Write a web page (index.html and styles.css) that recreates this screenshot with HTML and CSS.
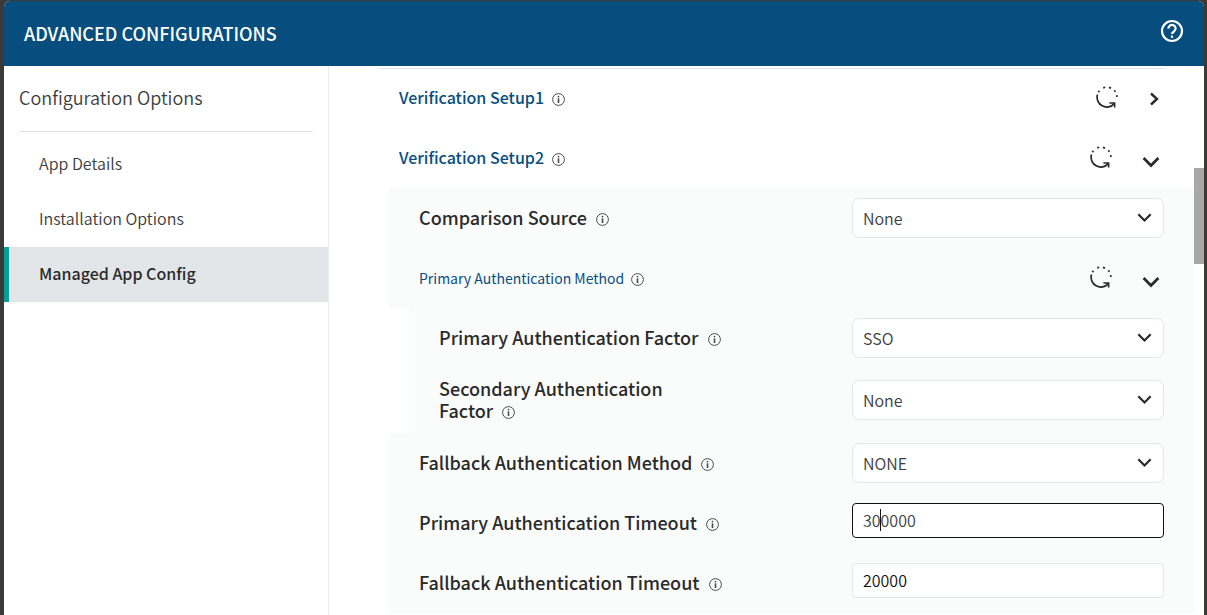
FILE: index.html
```html
<!DOCTYPE html>
<html lang="en">
<head>
<meta charset="utf-8">
<title>Advanced Configurations</title>
<link rel="stylesheet" href="styles.css">
</head>
<body>
<svg class="sprite" aria-hidden="true">
  <symbol id="info" viewBox="0 0 13 13"><circle cx="6.5" cy="6.5" r="5.9" fill="none" stroke="currentColor"/><path d="M6.5 5.3v4.7" stroke="currentColor" stroke-width="1.6"/><circle cx="6.5" cy="3.6" r=".9" fill="currentColor"/></symbol>
  <symbol id="reset" viewBox="0 0 22 22"><g fill="none" stroke="currentColor" stroke-width="1.7"><path d="M1.5 8.6A9.7 9.7 0 0 0 18.2 17.6"/><path d="M13.4 17h5.2v4.6"/><path d="M2.4 6.2l.9-1.5M7.2 1.9l2-.6M13 1.4l2 .7M18.3 4.4l1.1 1.4M20.7 9.2l.2 1.8"/></g></symbol>
  <symbol id="down" viewBox="0 0 18 12"><path d="M1.6 2l7.4 7.5L16.4 2" fill="none" stroke="currentColor" stroke-width="2.7"/></symbol>
  <symbol id="right" viewBox="0 0 12 14"><path d="M3 1.5L9 7l-6 5.5" fill="none" stroke="currentColor" stroke-width="2.4"/></symbol>
</svg>
<div class="dialog" role="dialog" aria-labelledby="title">
  <header class="titlebar">
    <h1 id="title">ADVANCED CONFIGURATIONS</h1>
    <button class="icon-button help" type="button" aria-label="Help">
      <svg width="24" height="24" viewBox="0 0 24 24" fill="none" stroke="currentColor" stroke-width="2.2"><circle cx="12" cy="12" r="10"/><path d="M8.4 9.6a3.6 3.6 0 1 1 5.7 2.8c-1.3.9-2.1 1.4-2.1 2.7"/><path d="M12 16.6v2.2"/></svg>
    </button>
  </header>
  <div class="body">
    <nav class="sidebar">
      <h2>Configuration Options</h2>
      <a href="#details">App Details</a>
      <a href="#install">Installation Options</a>
      <a href="#managed" class="active" aria-current="page">Managed App Config</a>
    </nav>
    <main class="content">
      <section class="group-head">
        <h3>Verification Setup1 <svg class="info"><use href="#info"/></svg></h3>
        <div class="actions">
          <button class="icon-button" type="button" aria-label="Reset Verification Setup1"><svg class="reset"><use href="#reset"/></svg></button>
          <button class="icon-button" type="button" aria-label="Expand Verification Setup1"><svg class="right"><use href="#right"/></svg></button>
        </div>
      </section>
      <section class="group-head">
        <h3>Verification Setup2 <svg class="info"><use href="#info"/></svg></h3>
        <div class="actions">
          <button class="icon-button" type="button" aria-label="Reset Verification Setup2"><svg class="reset"><use href="#reset"/></svg></button>
          <button class="icon-button" type="button" aria-label="Collapse Verification Setup2"><svg class="down"><use href="#down"/></svg></button>
        </div>
      </section>
      <form class="panel">
        <div class="field">
          <label for="source">Comparison <span class="last">Source <svg class="info"><use href="#info"/></svg></span></label>
          <div class="control"><select id="source"><option>None</option></select><svg class="arrow"><use href="#down"/></svg></div>
        </div>
        <div class="group-head sub">
          <h4>Primary Authentication Method <svg class="info"><use href="#info"/></svg></h4>
          <div class="actions">
            <button class="icon-button" type="button" aria-label="Reset Primary Authentication Method"><svg class="reset"><use href="#reset"/></svg></button>
            <button class="icon-button" type="button" aria-label="Collapse Primary Authentication Method"><svg class="down"><use href="#down"/></svg></button>
          </div>
        </div>
        <div class="nested">
          <div class="field">
            <label for="primary">Primary Authentication <span class="last">Factor <svg class="info"><use href="#info"/></svg></span></label>
            <div class="control"><select id="primary"><option>SSO</option></select><svg class="arrow"><use href="#down"/></svg></div>
          </div>
          <div class="field tall">
            <label for="secondary">Secondary Authentication <span class="last">Factor <svg class="info"><use href="#info"/></svg></span></label>
            <div class="control"><select id="secondary"><option>None</option></select><svg class="arrow"><use href="#down"/></svg></div>
          </div>
        </div>
        <div class="field">
          <label for="fallback">Fallback Authentication <span class="last">Method <svg class="info"><use href="#info"/></svg></span></label>
          <div class="control"><select id="fallback"><option>NONE</option></select><svg class="arrow"><use href="#down"/></svg></div>
        </div>
        <div class="field">
          <label for="ptimeout">Primary Authentication <span class="last">Timeout <svg class="info"><use href="#info"/></svg></span></label>
          <div class="control"><input id="ptimeout" class="focused" type="text" value="300000"><span class="caret"></span></div>
        </div>
        <div class="field">
          <label for="ftimeout">Fallback Authentication <span class="last">Timeout <svg class="info"><use href="#info"/></svg></span></label>
          <div class="control"><input id="ftimeout" class="strong" type="text" value="20000"></div>
        </div>
      </form>
    </main>
    <div class="scroll-track"><div class="scroll-thumb"></div></div>
  </div>
</div>
</body>
</html>
```
FILE: styles.css
```css
* { box-sizing: border-box; }
body {
  margin: 0;
  height: 100vh;
  overflow: hidden;
  padding: 1px 3px 0 4px;
  background: #3c3a39;
  color: #2a2a2a;
  font-family: "Noto Sans CJK SC", "Open Sans", sans-serif;
  font-size: 16px;
  line-height: 22px;
}
.sprite { position: absolute; width: 0; height: 0; }
h1, h2, h3, h4 { margin: 0; }
.dialog {
  display: flex;
  flex-direction: column;
  height: 100%;
  background: #fff;
  border-radius: 6px 6px 0 0;
  overflow: hidden;
}
.titlebar {
  display: flex;
  align-items: center;
  justify-content: space-between;
  flex: none;
  height: 65px;
  padding: 0 20px 2px;
  background: #074e7e;
  color: #fff;
}
.titlebar h1 { font-size: 18px; font-weight: 500; }
.icon-button {
  display: block;
  padding: 0;
  border: 0;
  background: none;
  color: inherit;
}
.icon-button svg { display: block; }
.help { margin-bottom: 4px; }
.body { display: flex; flex: 1; min-height: 0; }
.sidebar { flex: 0 0 325px; border-right: 1px solid #e9eaeb; }
.sidebar h2 {
  height: 66px;
  margin: 0 15px 5px;
  padding-top: 20px;
  border-bottom: 1px solid #e0e1e2;
  color: #3c3c3c;
  font-size: 18px;
  font-weight: 350;
}
.sidebar a {
  display: block;
  padding: 15px 30px 18px;
  border-left: 5px solid transparent;
  color: #3c3c3c;
  font-weight: 350;
  text-decoration: none;
}
.sidebar .active { border-color: #05a09a; background: #e2e6e9; color: #2a2a2a; font-weight: 500; }
.content { flex: 1; min-width: 0; margin-left: 50px; }
.content::before {
  content: "";
  display: block;
  height: 2px;
  margin: 0 30px -1px 0;
  border-bottom: 1px solid #dfe4e6;
}
.group-head {
  display: flex;
  align-items: center;
  justify-content: space-between;
  height: 60px;
  padding: 0 34px 2px 20px;
}
.group-head h3, .group-head h4 { color: #074e7e; font-size: 16px; font-weight: 500; }
.group-head h4 { padding-top: 2px; font-size: 14px; font-weight: 400; }
.sub { padding-left: 30px; }
.actions { display: flex; align-items: center; gap: 30px; }
.info { width: 13px; height: 13px; margin-left: 4px; color: #4a4a4a; vertical-align: -2px; }
.reset { width: 22px; height: 22px; }
.right { width: 12px; height: 14px; margin-top: 3px; }
.down { width: 18px; height: 12px; margin-top: 9px; }
.panel { margin: 0 0 0 10px; background: #fafcfc; }
.field {
  display: flex;
  justify-content: space-between;
  height: 60px;
  padding: 10px 30px 0;
}
.field label { flex: 0 1 310px; padding-top: 8px; font-size: 18px; font-weight: 500; }
.field .info { margin-left: 5px; vertical-align: -1px; }
.last { white-space: nowrap; }
.nested { padding-left: 20px; background: linear-gradient(to right, #fff 20px, #fafcfc 20px); }
.nested label { flex-basis: 286px; }
.tall { height: 65px; padding-top: 12px; }
.field.tall label { padding-top: 0; margin-top: -3px; }
.control { position: relative; flex: 0 0 312px; }
select, input {
  display: block;
  width: 100%;
  height: 35px;
  padding: 0 10px 2px;
  border: 1px solid #e4e7e7;
  border-radius: 4px;
  outline: 0;
  background: #fff;
  color: #3c3c3c;
  font: inherit;
  font-weight: 350;
}
select { height: 40px; padding-bottom: 0; border-radius: 7px; appearance: none; }
.strong { color: #111; }
.focused { border-color: #111; }
.arrow { position: absolute; top: 14px; right: 12px; width: 15px; height: 11px; pointer-events: none; }
.caret { position: absolute; top: 6px; left: 28px; width: 1px; height: 22px; background: #111; }
.scroll-track { flex: 0 0 10px; padding-top: 102px; background: #fff; }
.scroll-thumb { height: 96px; background: #a8a8a8; }
```
